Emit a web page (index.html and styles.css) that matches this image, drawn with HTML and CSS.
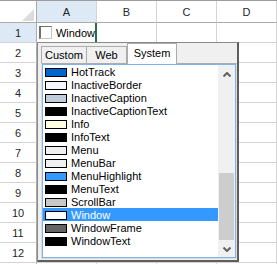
FILE: index.html
```html
<!DOCTYPE html>
<html>
<head>
<meta charset="utf-8">
<link rel="stylesheet" href="styles.css">
</head>
<body>
<div class="sheet">
  <div class="hc corner"><svg class="tri" width="37" height="22" viewBox="0 0 37 22"><polygon points="34,8 34,20 22,20" fill="#dcdcdc"/></svg></div>
  <div class="hc col sel">A</div>
  <div class="hc col">B</div>
  <div class="hc col">C</div>
  <div class="hc col">D</div>

  <div class="rn sel">1</div>
  <div class="cell a1"><span class="box"></span><span class="val">Window</span></div>
  <div class="cell"></div><div class="cell"></div><div class="cell"></div>

  <div class="rn">2</div><div class="cell"></div><div class="cell"></div><div class="cell"></div><div class="cell"></div>
  <div class="rn">3</div><div class="cell"></div><div class="cell"></div><div class="cell"></div><div class="cell"></div>
  <div class="rn">4</div><div class="cell"></div><div class="cell"></div><div class="cell"></div><div class="cell"></div>
  <div class="rn">5</div><div class="cell"></div><div class="cell"></div><div class="cell"></div><div class="cell"></div>
  <div class="rn">6</div><div class="cell"></div><div class="cell"></div><div class="cell"></div><div class="cell"></div>
  <div class="rn">7</div><div class="cell"></div><div class="cell"></div><div class="cell"></div><div class="cell"></div>
  <div class="rn">8</div><div class="cell"></div><div class="cell"></div><div class="cell"></div><div class="cell"></div>
  <div class="rn">9</div><div class="cell"></div><div class="cell"></div><div class="cell"></div><div class="cell"></div>
  <div class="rn">10</div><div class="cell"></div><div class="cell"></div><div class="cell"></div><div class="cell"></div>
  <div class="rn">11</div><div class="cell"></div><div class="cell"></div><div class="cell"></div><div class="cell"></div>
  <div class="rn">12</div><div class="cell"></div><div class="cell"></div><div class="cell"></div><div class="cell"></div>
  <div class="rn last"></div><div class="cell last"></div><div class="cell last"></div><div class="cell last"></div><div class="cell last"></div>
</div>

<div class="popup">
  <div class="tabs">
    <div class="tab t-custom">Custom</div>
    <div class="tab t-web">Web</div>
    <div class="tab t-system active">System</div>
  </div>
  <div class="page">
    <div class="list">
      <div class="items">
        <div class="item"><span class="sw" style="background:#0066cc"></span>HotTrack</div>
        <div class="item"><span class="sw" style="background:#f4f7fc"></span>InactiveBorder</div>
        <div class="item"><span class="sw" style="background:#bfcddb"></span>InactiveCaption</div>
        <div class="item"><span class="sw" style="background:#000000"></span>InactiveCaptionText</div>
        <div class="item"><span class="sw" style="background:#ffffe1"></span>Info</div>
        <div class="item"><span class="sw" style="background:#000000"></span>InfoText</div>
        <div class="item"><span class="sw" style="background:#f0f0f0"></span>Menu</div>
        <div class="item"><span class="sw" style="background:#f0f0f0"></span>MenuBar</div>
        <div class="item"><span class="sw" style="background:#3399ff"></span>MenuHighlight</div>
        <div class="item"><span class="sw" style="background:#000000"></span>MenuText</div>
        <div class="item"><span class="sw" style="background:#c8c8c8"></span>ScrollBar</div>
        <div class="item selected"><span class="sw" style="background:#ffffff"></span>Window</div>
        <div class="item"><span class="sw" style="background:#646464"></span>WindowFrame</div>
        <div class="item"><span class="sw" style="background:#000000"></span>WindowText</div>
      </div>
      <div class="sbar">
        <div class="sbtn up"><svg width="8" height="5" viewBox="0 0 8 5"><polyline points="0.5,4.5 4,1 7.5,4.5" fill="none" stroke="#606060" stroke-width="2"/></svg></div>
        <div class="track"><div class="thumb"></div></div>
        <div class="sbtn down"><svg width="8" height="5" viewBox="0 0 8 5"><polyline points="0.5,0.5 4,4 7.5,0.5" fill="none" stroke="#606060" stroke-width="2"/></svg></div>
      </div>
    </div>
  </div>
</div>
</body>
</html>
```

FILE: styles.css
```css
html, body {
  margin: 0;
  padding: 0;
}
body {
  width: 277px;
  height: 264px;
  overflow: hidden;
  position: relative;
  background: #ffffff;
  font-family: "Liberation Sans", Arial, sans-serif;
  font-size: 11px;
  color: #000;
}

/* ---------- spreadsheet ---------- */
.sheet {
  display: grid;
  grid-template-columns: 37px 60px 60px 60px 60px;
  grid-template-rows: 22px repeat(12, 20px) 1px;
  border-top: 1px solid #9c9c9c;
}
.hc, .rn, .cell {
  box-sizing: border-box;
}
.hc {
  border-right: 1px solid #d4d4d4;
  border-bottom: 1px solid #ababab;
  background: #ffffff;
  color: #262626;
  display: flex;
  align-items: center;
  justify-content: center;
  line-height: 21px;
  padding-top: 1px;
}
.corner {
  border-right: 1px solid #ababab;
  padding: 0;
  display: block;
}
.tri {
  display: block;
}
.hc.sel, .rn.sel {
  background: #dde9f5;
}
.rn {
  border-right: 1px solid #ababab;
  border-bottom: 1px solid #d4d4d4;
  color: #262626;
  display: flex;
  align-items: center;
  justify-content: center;
  padding-top: 1px;
}
.cell {
  border-right: 1px solid #d4d4d4;
  border-bottom: 1px solid #d4d4d4;
}
.rn.last, .cell.last {
  border-bottom: none;
  padding: 0;
}
.a1 {
  border-right: 2px solid #217346;
  display: flex;
  align-items: center;
  padding-left: 2px;
  gap: 4px;
}
.box {
  box-sizing: border-box;
  width: 13px;
  height: 13px;
  background: #ffffff;
  border-top: 1px solid #707070;
  border-left: 2px solid #707070;
  border-right: 1px solid #c4c4c4;
  border-bottom: 1px solid #c4c4c4;
}
.val {
  line-height: 13px;
  padding-top: 1px;
}

/* ---------- popup ---------- */
.popup {
  position: absolute;
  left: 37px;
  top: 42px;
  width: 202px;
  height: 220px;
  box-sizing: border-box;
  background: #f0f0f0;
  border-top: 1px solid #8a8a8a;
  border-left: 1px solid #8a8a8a;
  border-right: 2px solid #5e5e5e;
  border-bottom: 2px solid #5e5e5e;
}
.tabs {
  display: flex;
  align-items: flex-start;
  height: 21px;
  margin-left: 3px;
  margin-bottom: -1px;
}
.tab {
  box-sizing: border-box;
  height: 17px;
  margin-top: 3px;
  border-top: 1px solid #acacac;
  border-right: 1px solid #acacac;
  background: #f0f0f0;
  text-align: center;
  line-height: 16px;
  color: #000;
}
.t-custom {
  width: 46px;
  border-left: 1px solid #acacac;
}
.t-web {
  width: 40px;
}
.t-system {
  width: 50px;
  border-left: 1px solid #acacac;
}
.tab.active {
  height: 21px;
  margin-top: 0;
  background: #ffffff;
  padding-top: 1px;
  position: relative;
  z-index: 1;
}
.page {
  box-sizing: border-box;
  width: 196px;
  height: 196px;
  margin-left: 3px;
  border: 1px solid #dcdcdc;
  border-top-color: #acacac;
  background: #ffffff;
}
.list {
  box-sizing: border-box;
  width: 194px;
  height: 194px;
  border: 1px solid #7eb4ea;
  background: #ffffff;
  display: flex;
}
.items {
  width: 175px;
  display: flex;
  flex-direction: column;
}
.item {
  box-sizing: border-box;
  height: 13px;
  display: flex;
  align-items: flex-start;
  padding-left: 2px;
  padding-top: 2px;
  line-height: 11px;
  white-space: nowrap;
  color: #000;
}
.item.selected {
  background: #3399ff;
  color: #ffffff;
}
.sw {
  box-sizing: border-box;
  width: 22px;
  height: 9px;
  margin-top: 1px;
  margin-right: 4px;
  border: 1px solid #000000;
  flex: none;
}
.sbar {
  width: 17px;
  display: flex;
  flex-direction: column;
  background: #f0f0f0;
}
.sbtn {
  height: 17px;
  display: flex;
  justify-content: center;
  align-items: flex-start;
  flex: none;
}
.sbtn.up {
  padding-top: 7px;
  box-sizing: border-box;
}
.sbtn.down {
  padding-top: 7px;
  box-sizing: border-box;
}
.sbtn svg {
  display: block;
}
.track {
  flex: 1;
  display: flex;
  flex-direction: column;
  justify-content: flex-end;
}
.thumb {
  height: 67px;
  margin: 0 1px;
  background: #cdcdcd;
}
```
